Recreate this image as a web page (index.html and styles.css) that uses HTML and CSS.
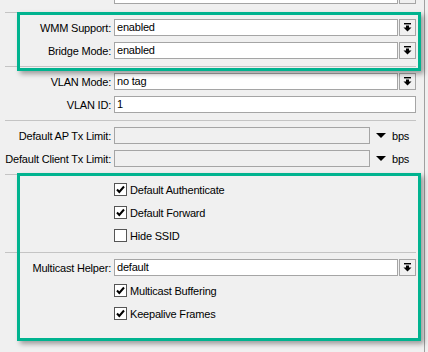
FILE: index.html
```html
<!DOCTYPE html>
<html lang="en">

<head>
  <meta charset="UTF-8">
  <meta name="viewport" content="width=device-width, initial-scale=1.0">
  <title>Wireless Advanced</title>
  <link rel="stylesheet" href="styles.css">
</head>

<body>
  <div class="panel">
    <div class="section section-cut">
      <div class="row">
        <label class="label">Installation:</label>
        <div class="field">
          <div class="input">indoor</div>
          <span class="drop"><svg width="9" height="9" viewBox="0 0 9 9"><rect x="1" y="0" width="7" height="1.4"/><path d="M3 2.5h3v2h2.5L4.5 8.5 0.5 4.5H3z"/></svg></span>
        </div>
      </div>
    </div>

    <div class="section">
      <div class="row">
        <label class="label">WMM Support:</label>
        <div class="field">
          <div class="input">enabled</div>
          <span class="drop"><svg width="9" height="9" viewBox="0 0 9 9"><rect x="1" y="0" width="7" height="1.4"/><path d="M3 2.5h3v2h2.5L4.5 8.5 0.5 4.5H3z"/></svg></span>
        </div>
      </div>
      <div class="row">
        <label class="label">Bridge Mode:</label>
        <div class="field">
          <div class="input">enabled</div>
          <span class="drop"><svg width="9" height="9" viewBox="0 0 9 9"><rect x="1" y="0" width="7" height="1.4"/><path d="M3 2.5h3v2h2.5L4.5 8.5 0.5 4.5H3z"/></svg></span>
        </div>
      </div>
    </div>

    <div class="section">
      <div class="row">
        <label class="label">VLAN Mode:</label>
        <div class="field">
          <div class="input">no tag</div>
          <span class="drop"><svg width="9" height="9" viewBox="0 0 9 9"><rect x="1" y="0" width="7" height="1.4"/><path d="M3 2.5h3v2h2.5L4.5 8.5 0.5 4.5H3z"/></svg></span>
        </div>
      </div>
      <div class="row">
        <label class="label">VLAN ID:</label>
        <div class="field">
          <div class="input">1</div>
        </div>
      </div>
    </div>

    <div class="section">
      <div class="row">
        <label class="label">Default AP Tx Limit:</label>
        <div class="field">
          <div class="input input-off"></div>
          <span class="unit"><i class="tri"></i>bps</span>
        </div>
      </div>
      <div class="row">
        <label class="label">Default Client Tx Limit:</label>
        <div class="field">
          <div class="input input-off"></div>
          <span class="unit"><i class="tri"></i>bps</span>
        </div>
      </div>
    </div>

    <div class="section section-flags">
      <div class="row">
        <div class="check-line">
          <span class="box"><svg width="11" height="11" viewBox="0 0 11 11"><path d="M2 5.5l2.3 2.5L9 2.5"/></svg></span>Default Authenticate
        </div>
      </div>
      <div class="row">
        <div class="check-line">
          <span class="box"><svg width="11" height="11" viewBox="0 0 11 11"><path d="M2 5.5l2.3 2.5L9 2.5"/></svg></span>Default Forward
        </div>
      </div>
      <div class="row">
        <div class="check-line">
          <span class="box"></span>Hide SSID
        </div>
      </div>
    </div>

    <div class="section section-last">
      <div class="row">
        <label class="label">Multicast Helper:</label>
        <div class="field">
          <div class="input">default</div>
          <span class="drop"><svg width="9" height="9" viewBox="0 0 9 9"><rect x="1" y="0" width="7" height="1.4"/><path d="M3 2.5h3v2h2.5L4.5 8.5 0.5 4.5H3z"/></svg></span>
        </div>
      </div>
      <div class="row">
        <div class="check-line">
          <span class="box"><svg width="11" height="11" viewBox="0 0 11 11"><path d="M2 5.5l2.3 2.5L9 2.5"/></svg></span>Multicast Buffering
        </div>
      </div>
      <div class="row">
        <div class="check-line">
          <span class="box"><svg width="11" height="11" viewBox="0 0 11 11"><path d="M2 5.5l2.3 2.5L9 2.5"/></svg></span>Keepalive Frames
        </div>
      </div>
    </div>

    <div class="highlight highlight-wmm"></div>
    <div class="highlight highlight-flags"></div>
  </div>
</body>

</html>
```

FILE: styles.css
```css
html,
body {
  margin: 0;
  background: #f0f0f0;
}

body {
  width: 428px;
  height: 352px;
  overflow: hidden;
  font-family: "Liberation Sans", Arial, sans-serif;
  font-size: 11px;
  letter-spacing: -0.2px;
  color: #000;
}

.panel {
  display: flow-root;
  width: 425px;
  height: 352px;
  border-right: 1px solid #a0a0a0;
  position: relative;
  box-sizing: border-box;
}

.section {
  margin: 0 8px 0 5px;
  padding: 6px 0 7px;
  border-bottom: 1px solid #c4c4c4;
  display: flex;
  flex-direction: column;
  gap: 6px;
}

.section-cut {
  margin-top: -13px;
  padding: 0 0 8px;
}

.section-flags {
  padding-bottom: 8px;
}

.section-last {
  border-bottom: 0;
}

.row {
  display: grid;
  grid-template-columns: 106px 1fr;
  column-gap: 3px;
  height: 17px;
  align-items: center;
}

.label {
  display: flex;
  justify-content: flex-end;
  white-space: nowrap;
}

.field {
  display: flex;
  align-items: center;
  gap: 1px;
  height: 17px;
}

.input {
  flex: 1;
  height: 17px;
  box-sizing: border-box;
  border: 1px solid #a5a5a5;
  background: #fff;
  padding: 0 2px;
  line-height: 15px;
  white-space: nowrap;
}

.input-off {
  background: #f0f0f0;
}

.drop {
  width: 17px;
  height: 17px;
  box-sizing: border-box;
  border: 1px solid #a5a5a5;
  background: #f0f0f0;
  display: flex;
  align-items: center;
  justify-content: center;
}

.drop svg {
  fill: #000;
}

.unit {
  width: 45px;
  display: flex;
  align-items: center;
  gap: 6px;
  padding-left: 5px;
  box-sizing: border-box;
}

.tri {
  width: 0;
  height: 0;
  border-left: 5px solid transparent;
  border-right: 5px solid transparent;
  border-top: 5px solid #000;
}

.check-line {
  grid-column: 2;
  display: flex;
  align-items: center;
  gap: 3px;
  white-space: nowrap;
}

.box {
  width: 13px;
  height: 13px;
  box-sizing: border-box;
  border: 1px solid #555;
  background: #fff;
  display: flex;
}

.box svg {
  fill: none;
  stroke: #000;
  stroke-width: 2;
}

.highlight {
  position: absolute;
  left: 17px;
  width: 404px;
  box-sizing: border-box;
  border: 3px solid #00b38f;
  box-shadow: 3px 3px 5px rgba(0, 0, 0, .35);
}

.highlight-wmm {
  top: 12px;
  height: 59px;
}

.highlight-flags {
  top: 173px;
  height: 168px;
}
```
